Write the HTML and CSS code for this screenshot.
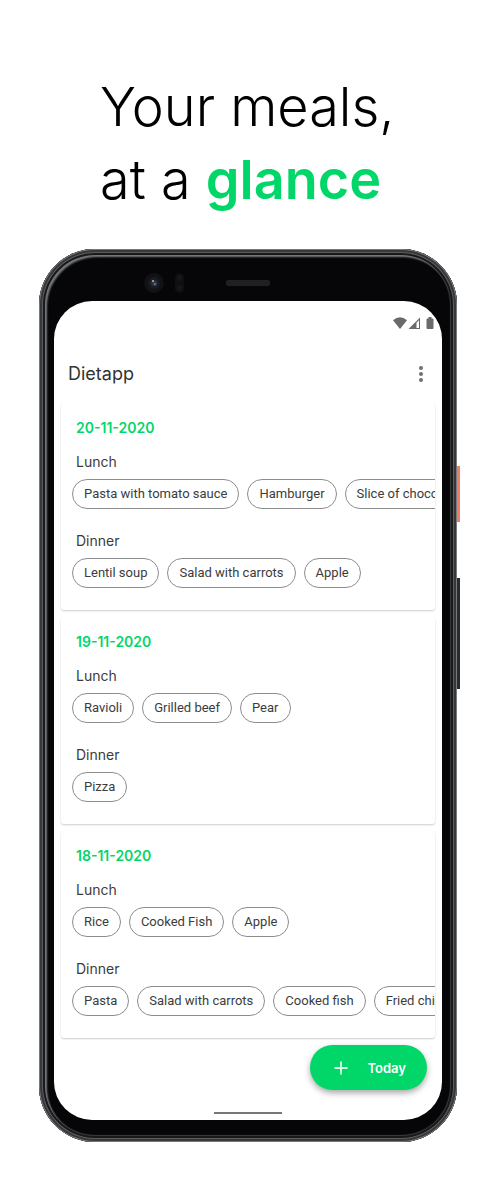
FILE: index.html
```html
<!DOCTYPE html>
<html lang="en">
<head>
<meta charset="utf-8">
<meta name="viewport" content="width=device-width, initial-scale=1">
<title>Dietapp</title>
<link rel="stylesheet" href="styles.css">
</head>
<body>
<main class="page">
  <h1 class="headline">Your meals,<br>at a <strong>glance</strong></h1>
  <div class="phone">
    <span class="side-button power"></span>
    <span class="side-button volume"></span>
    <div class="phone-top">
      <svg class="sensors" width="140" height="24" viewBox="0 0 140 24" aria-hidden="true">
        <circle cx="15" cy="12" r="10" fill="#111214"/>
        <circle cx="15" cy="12" r="6" fill="#1b1c20"/>
        <circle cx="15" cy="12" r="3" fill="#2b3143"/>
        <circle cx="16" cy="13" r="1.500" fill="#536385"/>
        <circle cx="14" cy="10" r="1" fill="#b3b7c2"/>
        <rect x="36" y="2" width="9" height="20" rx="4.500" fill="#0e0f11"/>
        <circle cx="40.500" cy="7" r="3" fill="#151618"/>
        <circle cx="40.500" cy="17" r="3" fill="#151618"/>
        <rect x="87" y="9" width="44" height="6" rx="2" fill="#202020"/>
      </svg>
    </div>
    <div class="screen">
      <div class="status">
        <svg width="44" height="14" viewBox="0 0 44 14" aria-hidden="true" fill="#6a6a6a">
          <path d="M2 4.200Q9 -1.800 16 4.200L9 13Z"/>
          <path d="M17.500 13L29 1.500V13Z"/>
          <path d="M25.500 6.800L28 4.300V12H25.500Z" fill="#fff"/>
          <path d="M36.500 2.500h1V1h3v1.500h1q1 0 1 1V12q0 1-1 1h-5q-1 0-1-1V3.500q0-1 1-1Z"/>
        </svg>
      </div>
      <header class="appbar">
        <h2 class="app-title">Dietapp</h2>
        <button class="menu" type="button" aria-label="More options">
          <svg width="6" height="18" viewBox="0 0 6 18" fill="#707070" aria-hidden="true"><circle cx="3" cy="3" r="2"/><circle cx="3" cy="9" r="2"/><circle cx="3" cy="15" r="2"/></svg>
        </button>
      </header>
      <div class="days">
        <section class="card">
          <h3 class="date">20-11-2020</h3>
          <h4 class="meal">Lunch</h4>
          <ul class="chips"><li class="chip">Pasta with tomato sauce</li><li class="chip">Hamburger</li><li class="chip">Slice of chocolate cake</li></ul>
          <h4 class="meal">Dinner</h4>
          <ul class="chips"><li class="chip">Lentil soup</li><li class="chip">Salad with carrots</li><li class="chip">Apple</li></ul>
        </section>
        <section class="card">
          <h3 class="date">19-11-2020</h3>
          <h4 class="meal">Lunch</h4>
          <ul class="chips"><li class="chip">Ravioli</li><li class="chip">Grilled beef</li><li class="chip">Pear</li></ul>
          <h4 class="meal">Dinner</h4>
          <ul class="chips"><li class="chip">Pizza</li></ul>
        </section>
        <section class="card">
          <h3 class="date">18-11-2020</h3>
          <h4 class="meal">Lunch</h4>
          <ul class="chips"><li class="chip">Rice</li><li class="chip">Cooked Fish</li><li class="chip">Apple</li></ul>
          <h4 class="meal">Dinner</h4>
          <ul class="chips"><li class="chip">Pasta</li><li class="chip">Salad with carrots</li><li class="chip">Cooked fish</li><li class="chip">Fried chicken</li></ul>
        </section>
      </div>
      <div class="actions">
        <button class="today" type="button">
          <svg width="14" height="14" viewBox="0 0 14 14" aria-hidden="true"><path d="M7 0.500V13.500M0.500 7H13.500" stroke="#d9ffe8" stroke-width="1.800"/></svg>
          <span>Today</span>
        </button>
      </div>
      <div class="home-bar"></div>
    </div>
  </div>
</main>
</body>
</html>
```
FILE: styles.css
```css
* { box-sizing: border-box; }
body { margin: 0; background: #fff; font-family: Roboto, "Liberation Sans", sans-serif; color: #3c3c3c; }
h1, h2, h3, h4, ul { margin: 0; padding: 0; font-weight: 400; }
button { border: 0; margin: 0; padding: 0; font-family: inherit; cursor: pointer; }
svg { display: block; }
.page { padding: 70px 42px 42px 39px; }
.headline { padding-left: 61px; font-family: Inter, sans-serif; font-weight: 300; font-size: 54px; line-height: 73px; color: #000; white-space: nowrap; }
.headline strong { font-weight: 600; color: #00d768; }
.phone {
  position: relative; margin-top: 33px; padding: 2px 15px 22px; border-radius: 56px; background: #060608;
  box-shadow: inset 0 0 0 1px #77797b, inset 0 0 0 3px #36383a, inset 0 0 0 4px #5a5c5e, inset 0 0 0 6px #18191b, inset 2px 2px 2px 6px #76787a, inset 0 0 1px 7px #3c3d3f;
}
.side-button { position: absolute; left: 100%; width: 3px; }
.power { top: 217px; height: 56px; background: #f07d69; }
.volume { top: 329px; height: 111px; background: #292a2c; }
.phone-top { height: 50px; padding: 20px 0 0 85px; }
.screen { background: #fff; border-radius: 38px; overflow: hidden; padding: 15px 7px 6px; }
.status { display: flex; justify-content: flex-end; }
.appbar { display: flex; align-items: center; justify-content: space-between; height: 73px; padding: 14px 11px 0 7px; }
.app-title { font-family: Inter, sans-serif; font-size: 18px; line-height: 24px; color: #333; }
.menu { background: none; }
.days { display: grid; gap: 7px; }
.card { height: 207px; padding: 15px 0 0 11px; border-radius: 3px; overflow: hidden; box-shadow: 0 1px 2px rgba(0, 0, 0, .2); }
.date { padding-left: 4px; font-family: Inter, sans-serif; font-size: 14px; line-height: 20px; font-weight: 600; color: #00d768; }
.meal { padding-left: 4px; font-family: Inter, sans-serif; font-size: 14px; line-height: 20px; margin-top: 14px; }
.chips { display: flex; gap: 8px; margin-top: 7px; list-style: none; overflow: hidden; }
.chips + .meal { margin-top: 22px; }
.chip { flex: none; height: 30px; padding: 0 11px; border: 1px solid #8c8c8c; border-radius: 15px; font-size: 13px; line-height: 28px; white-space: nowrap; }
.actions { display: flex; justify-content: flex-end; padding: 7px 8px 0 0; }
.today { display: flex; align-items: center; gap: 20px; height: 45px; padding: 0 21px 0 24px; border-radius: 23px; background: #00d768; color: #fff; font-family: Inter, sans-serif; font-size: 13px; font-weight: 600; box-shadow: 0 3px 6px rgba(0, 0, 0, .35); }
.home-bar { width: 68px; height: 2px; margin: 22px auto 0; background: #777; }
```
